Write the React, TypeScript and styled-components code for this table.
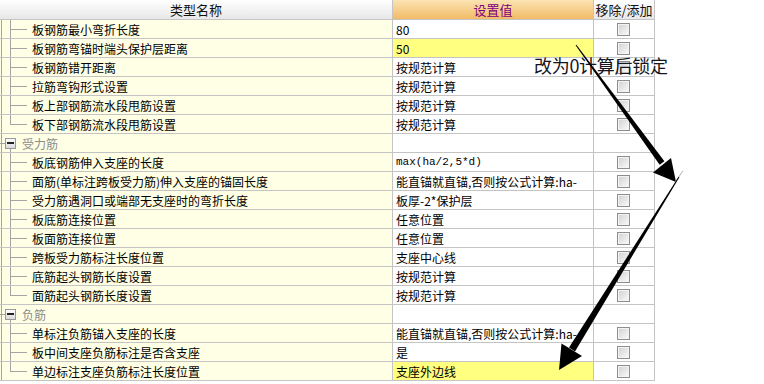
import React from "react";
import styled, { createGlobalStyle, css } from "styled-components";

type Kind = "child" | "last" | "group";

interface Row {
  kind: Kind;
  name: string;
  value?: string;
  mono?: boolean;
  highlight?: boolean;
}

const rows: Row[] = [
  { kind: "child", name: "板钢筋最小弯折长度", value: "80" },
  { kind: "child", name: "板钢筋弯锚时端头保护层距离", value: "50", highlight: true },
  { kind: "child", name: "板钢筋错开距离", value: "按规范计算" },
  { kind: "child", name: "拉筋弯钩形式设置", value: "按规范计算" },
  { kind: "child", name: "板上部钢筋流水段甩筋设置", value: "按规范计算" },
  { kind: "last", name: "板下部钢筋流水段甩筋设置", value: "按规范计算" },
  { kind: "group", name: "受力筋" },
  { kind: "child", name: "板底钢筋伸入支座的长度", value: "max(ha/2,5*d)", mono: true },
  { kind: "child", name: "面筋(单标注跨板受力筋)伸入支座的锚固长度", value: "能直锚就直锚,否则按公式计算:ha-" },
  { kind: "child", name: "受力筋遇洞口或端部无支座时的弯折长度", value: "板厚-2*保护层" },
  { kind: "child", name: "板底筋连接位置", value: "任意位置" },
  { kind: "child", name: "板面筋连接位置", value: "任意位置" },
  { kind: "child", name: "跨板受力筋标注长度位置", value: "支座中心线" },
  { kind: "child", name: "底筋起头钢筋长度设置", value: "按规范计算" },
  { kind: "last", name: "面筋起头钢筋长度设置", value: "按规范计算" },
  { kind: "group", name: "负筋" },
  { kind: "child", name: "单标注负筋锚入支座的长度", value: "能直锚就直锚,否则按公式计算:ha-" },
  { kind: "child", name: "板中间支座负筋标注是否含支座", value: "是" },
  { kind: "last", name: "单边标注支座负筋标注长度位置", value: "支座外边线", highlight: true },
];

const GlobalStyle = createGlobalStyle`
  html, body {
    margin: 0;
    padding: 0;
    background: #ffffff;
  }
  body {
    font-family: "Noto Sans CJK SC", "DejaVu Sans", sans-serif;
    font-size: 12px;
    color: #000000;
  }
`;

const Stage = styled.div`
  position: relative;
  width: 764px;
  height: 384px;
  overflow: hidden;
`;

const Grid = styled.div`
  display: grid;
  grid-template-columns: 393px 201px 61px;
  grid-auto-rows: 19px;
  grid-template-rows: 20px;
  width: 655px;
`;

const HeadCell = styled.div<{ $tone: "gray" | "orange" }>`
  display: flex;
  align-items: center;
  justify-content: center;
  box-sizing: border-box;
  border-right: 1px solid #c4c4c4;
  border-bottom: 1px solid #c4c4c4;
  font-size: 13px;
  white-space: nowrap;
  ${({ $tone }) =>
    $tone === "orange"
      ? css`
          background: linear-gradient(#fbe3b3, #f2bb66);
          color: #800080;
        `
      : css`
          background: linear-gradient(#ffffff, #e7e7e7);
          color: #111111;
        `}
`;

const line = "#a4a4a4";

const NameCell = styled.div<{ $kind: Kind }>`
  display: flex;
  align-items: center;
  box-sizing: border-box;
  height: 19px;
  border-right: 1px solid #c4c4c4;
  border-bottom: 1px solid #c4c4c4;
  background-color: #ffffe6;
  background-repeat: no-repeat;
  white-space: nowrap;
  overflow: hidden;
  ${({ $kind }) =>
    $kind === "group"
      ? css`
          padding-left: 5px;
          color: #8c8c8c;
          background-image: linear-gradient(${line}, ${line}),
            linear-gradient(${line}, ${line}), linear-gradient(${line}, ${line});
          background-size: 1px 100%, 5px 1px, 1px 5px;
          background-position: 1px 0, 0 9px, 10px 14px;
        `
      : css`
          padding-left: 32px;
          background-image: linear-gradient(${line}, ${line}),
            linear-gradient(${line}, ${line}), linear-gradient(${line}, ${line});
          background-size: 1px 100%, 1px ${$kind === "last" ? "10px" : "100%"}, 17px 1px;
          background-position: 1px 0, 10px 0, 10px 9px;
        `}
`;

const Expander = styled.span`
  display: inline-flex;
  align-items: center;
  justify-content: center;
  box-sizing: border-box;
  width: 11px;
  height: 11px;
  margin-right: 6px;
  border: 1px solid #9a9a9a;
  background: linear-gradient(#ffffff, #d9d9d9);

  &::before {
    content: "";
    width: 7px;
    height: 2px;
    background: #222222;
  }
`;

const ValueCell = styled.div<{ $highlight?: boolean; $mono?: boolean }>`
  display: flex;
  align-items: center;
  box-sizing: border-box;
  height: 19px;
  padding-left: 3px;
  border-right: 1px solid #c4c4c4;
  border-bottom: 1px solid #c4c4c4;
  background: ${({ $highlight }) => ($highlight ? "#ffff80" : "#ffffff")};
  white-space: nowrap;
  overflow: hidden;
  ${({ $mono }) =>
    $mono &&
    css`
      font-family: "Liberation Mono", "DejaVu Sans Mono", monospace;
      font-size: 11px;
    `}
`;

const CheckCell = styled.div`
  display: flex;
  align-items: center;
  justify-content: center;
  box-sizing: border-box;
  height: 19px;
  padding-right: 1px;
  border-right: 1px solid #c4c4c4;
  border-bottom: 1px solid #c4c4c4;
  background: #ffffff;
`;

const Check = styled.span`
  display: block;
  box-sizing: border-box;
  width: 13px;
  height: 13px;
  border: 1px solid #8e8e8e;
  box-shadow: inset 0 0 0 1px #f4f4f4;
  background: linear-gradient(135deg, #d0d0d0, #fbfbfb);
`;

const Note = styled.div`
  position: absolute;
  left: 534px;
  top: 53px;
  font-family: "Noto Sans CJK SC", "DejaVu Sans", sans-serif;
  font-size: 18px;
  line-height: 24px;
  color: #151520;
  white-space: nowrap;
  letter-spacing: -0.3px;
`;

const Arrows = styled.svg`
  position: absolute;
  left: 0;
  top: 0;
  pointer-events: none;
`;

const ArrowMarks = () => (
  <Arrows width="764" height="384" viewBox="0 0 764 384">
    <polygon points="575.6,45.3 576.4,44.7 664.4,161.2 659.6,164.8" fill="#000" />
    <polygon points="676,182 653,172.5 671,158" fill="#000" />
    <line x1="675" y1="182" x2="683" y2="171" stroke="#9a9a9a" strokeWidth="0.8" />
    <polygon points="679.4,177.3 678.6,176.8 569,347.6 575,351.4" fill="#000" />
    <polygon points="559,370 561.5,343.5 582,356" fill="#000" />
  </Arrows>
);

export default function App() {
  return (
    <Stage>
      <GlobalStyle />
      <Grid>
        <HeadCell $tone="gray">类型名称</HeadCell>
        <HeadCell $tone="orange">设置值</HeadCell>
        <HeadCell $tone="gray">移除/添加</HeadCell>
        {rows.map((r, i) => (
          <React.Fragment key={i}>
            <NameCell $kind={r.kind}>
              {r.kind === "group" && <Expander />}
              {r.name}
            </NameCell>
            <ValueCell $highlight={r.highlight} $mono={r.mono}>
              {r.value}
            </ValueCell>
            <CheckCell>{r.kind !== "group" && <Check />}</CheckCell>
          </React.Fragment>
        ))}
      </Grid>
      <Note>改为0计算后锁定</Note>
      <ArrowMarks />
    </Stage>
  );
}
